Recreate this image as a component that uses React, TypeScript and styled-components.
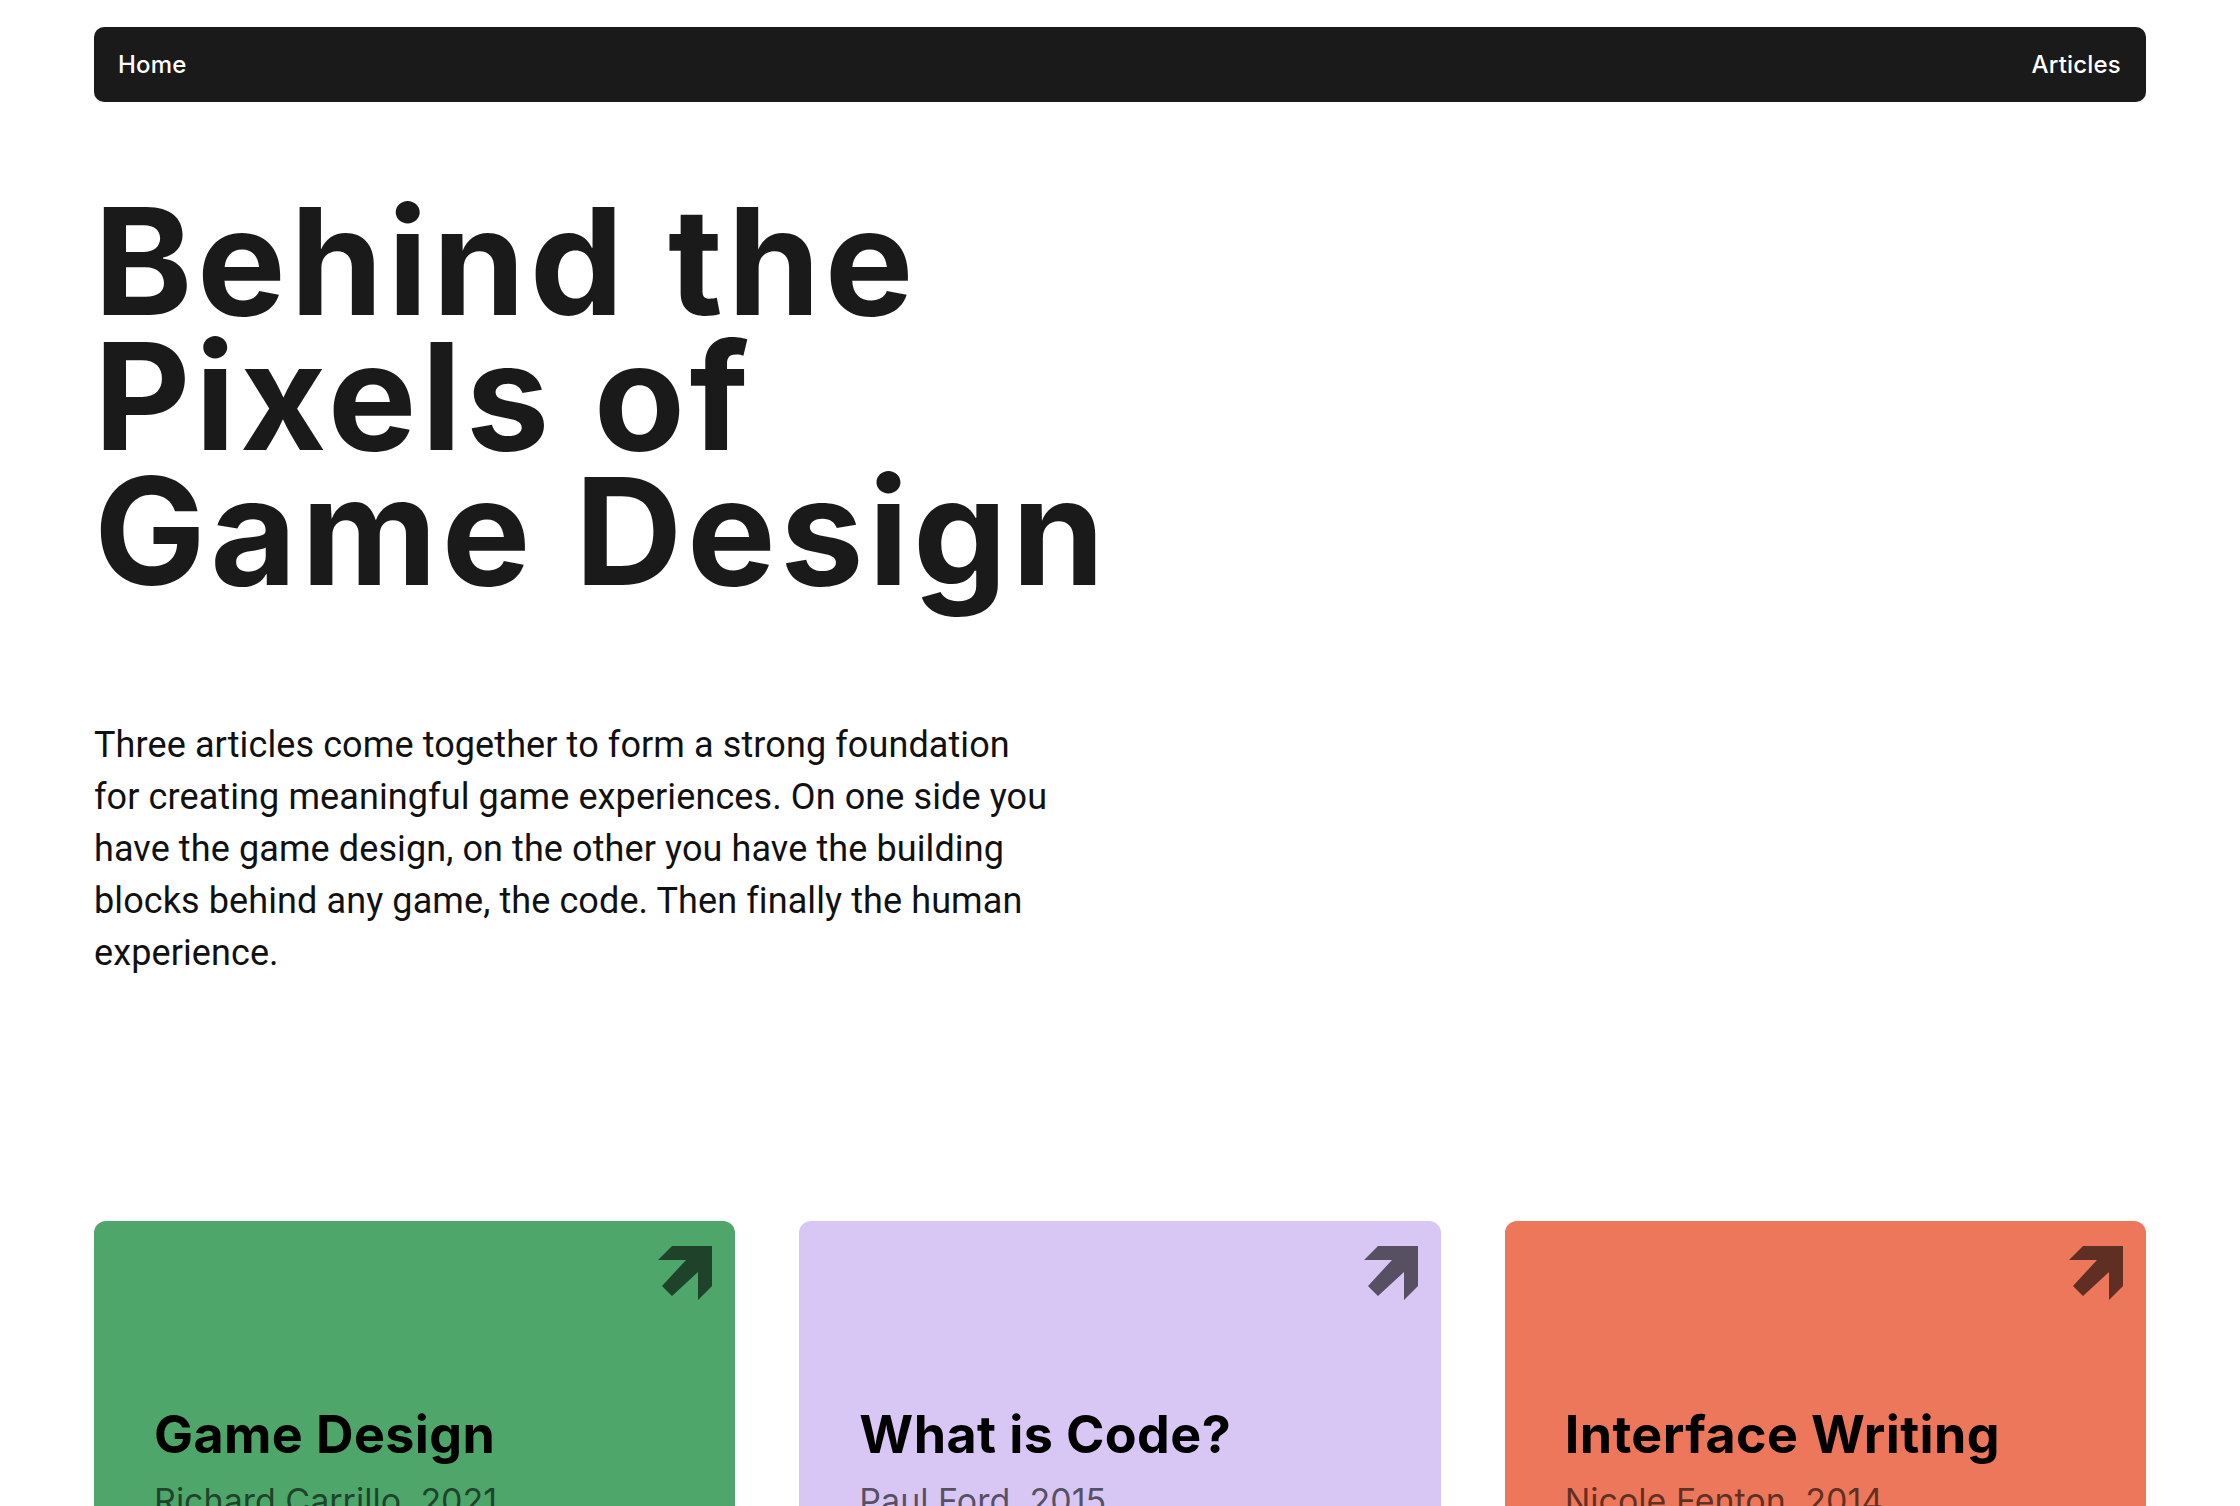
import React from 'react';
import styled, {createGlobalStyle} from "styled-components";


type Article = {
    title: string;
    byline: string;
    color: string;
}

const articles: Article[] = [
    {title: 'Game Design', byline: 'Richard Carrillo, 2021', color: '#4ea66a'},
    {title: 'What is Code?', byline: 'Paul Ford, 2015', color: '#d8c7f4'},
    {title: 'Interface Writing', byline: 'Nicole Fenton, 2014', color: '#ed775a'},
];


export default function App() {
    return (
        <>
            <GlobalStyle/>
            <Page>
                <Nav>
                    <NavLink>Home</NavLink>
                    <NavLink>Articles</NavLink>
                </Nav>

                <Hero>
                    <Title>Behind the<br/>Pixels of<br/>Game Design</Title>
                    <Intro>
                        Three articles come together to form a strong foundation for creating meaningful
                        game experiences. On one side you have the game design, on the other you have the
                        building blocks behind any game, the code. Then finally the human experience.
                    </Intro>
                </Hero>

                <Cards>
                    {articles.map((article) => (
                        <Card key={article.title} $bg={article.color}>
                            <CardTop>
                                <ArrowIcon/>
                            </CardTop>
                            <CardTitle>{article.title}</CardTitle>
                            <Byline>{article.byline}</Byline>
                        </Card>
                    ))}
                </Cards>
            </Page>
        </>
    );
}

const ArrowIcon = () => (
    <Arrow viewBox="0 0 54 54" aria-hidden>
        <polygon points="14,0 54,0 54,40 40,54 40,26 14,50 4,40 28,14 0,14"/>
    </Arrow>
);

const GlobalStyle = createGlobalStyle`
    * {
        box-sizing: border-box;
    }

    body {
        margin: 0;
        background: #ffffff;
        color: #1a1a1a;
        font-family: Inter, "Noto Sans", sans-serif;
    }
`;

const Page = styled.div`
    padding: 27px 94px 80px;
`;

const Nav = styled.nav`
    display: flex;
    justify-content: space-between;
    align-items: center;
    height: 75px;
    padding: 0 25px 0 24px;
    background: #1a1a1a;
    border-radius: 10px;
`;

const NavLink = styled.a`
    color: #ffffff;
    font-size: 24px;
    font-weight: 500;
    letter-spacing: 0.2px;
    cursor: pointer;
`;

const Hero = styled.section`
    padding-top: 92px;
`;

const Title = styled.h1`
    margin: 0;
    font-size: 149px;
    font-weight: 700;
    line-height: 135px;
    letter-spacing: 4.5px;
    color: #1a1a1a;
`;

const Intro = styled.p`
    max-width: 962px;
    margin: 120px 0 0;
    font-family: Roboto, "Liberation Sans", sans-serif;
    font-size: 36px;
    line-height: 52px;
    letter-spacing: 0.1px;
    color: #111111;
`;

const Cards = styled.div`
    display: grid;
    grid-template-columns: repeat(3, 1fr);
    gap: 64px;
    margin-top: 242px;
`;

const Card = styled.article<{ $bg: string }>`
    display: flex;
    flex-direction: column;
    min-height: 420px;
    padding: 25px 23px 60px 60px;
    background: ${({$bg}) => $bg};
    border-radius: 12px;
`;

const CardTop = styled.div`
    display: flex;
    justify-content: flex-end;
    margin-bottom: 104px;
`;

const Arrow = styled.svg`
    width: 54px;
    height: 54px;
    fill: rgba(0, 0, 0, 0.6);
`;

const CardTitle = styled.h2`
    margin: 0;
    font-size: 52px;
    font-weight: 700;
    line-height: 62px;
    letter-spacing: 0.4px;
    color: #000000;
`;

const Byline = styled.p`
    margin: 12px 0 0;
    font-size: 34px;
    line-height: 46px;
    color: rgba(0, 0, 0, 0.6);
`;
